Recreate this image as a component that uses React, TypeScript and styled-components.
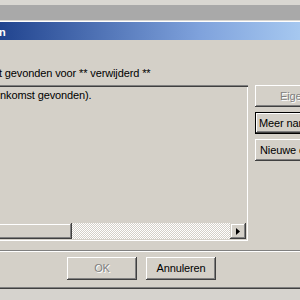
import React from "react";
import styled, { createGlobalStyle } from "styled-components";

const GlobalStyle = createGlobalStyle`
  html, body { margin: 0; padding: 0; background: #d6d3ce; }
  body { font-family: "Liberation Sans", Arial, sans-serif; font-size: 11px; }
`;

const Screen = styled.div`
  width: 300px;
  height: 300px;
  overflow: hidden;
  background: #d6d3ce;
  display: flex;
  flex-direction: column;
`;

const TopStrip = styled.div`
  height: 5px;
  background: #d9d7d2;
`;

const InactiveBand = styled.div`
  height: 15px;
  background: #a9a9a9;
`;

const Dialog = styled.div`
  display: flex;
  flex-direction: column;
  background: #d4d0c8;
  border-top: 1px solid #dcd9d3;
  box-shadow: inset 0 1px #ffffff;
  padding-top: 1px;
`;

const TitleBar = styled.div`
  height: 18px;
  background: linear-gradient(to right, #21448f 0px, #7fa2dc 200px, #a6c8f0 300px);
  color: #ffffff;
  font-weight: bold;
  font-size: 11px;
  line-height: 18px;
  display: flex;
  align-items: center;
  overflow: hidden;
  white-space: nowrap;
`;

const TitleText = styled.span`
  margin-left: -1px;
  padding-top: 1px;
`;

const Body = styled.div`
  display: flex;
  flex-direction: column;
  padding-top: 27px;
`;

const Label = styled.div`
  height: 13px;
  line-height: 13px;
  color: #000;
  white-space: nowrap;
  letter-spacing: -0.12px;
  margin-left: -1px;
`;

const MainRow = styled.div`
  display: flex;
  align-items: flex-start;
  margin-top: 5px;
`;

const ListBox = styled.div`
  margin-left: -10px;
  width: 258px;
  height: 156px;
  box-sizing: border-box;
  flex-shrink: 0;
  display: flex;
  flex-direction: column;
  padding: 2px;
  background: #d4d0c8;
  box-shadow: inset 1px 1px #808080, inset 2px 2px #404040, inset -1px -1px #ffffff, inset -2px -2px #d4d0c8;
`;

const ListItems = styled.div`
  flex: 1;
  padding: 2px 0 0 8px;
  overflow: hidden;
`;

const ListItem = styled.div`
  line-height: 13px;
  height: 13px;
  white-space: nowrap;
  letter-spacing: -0.12px;
  color: #000;
`;

const HScroll = styled.div`
  height: 16px;
  display: flex;
`;

const raised = `
  background: #d4d0c8;
  box-shadow: inset -1px -1px #404040, inset 1px 1px #d4d0c8, inset -2px -2px #808080, inset 2px 2px #ffffff;
`;

const Thumb = styled.div`
  width: 80px;
  ${raised}
`;

const Track = styled.div`
  flex: 1;
  background: repeating-conic-gradient(#ffffff 0 25%, #d4d0c8 0 50%) 0 0 / 2px 2px;
`;

const ArrowButton = styled.div`
  width: 16px;
  ${raised}
  display: flex;
  align-items: center;
  justify-content: center;
`;

const ButtonColumn = styled.div`
  display: flex;
  flex-direction: column;
  gap: 5px;
  margin-left: 7px;
  flex-shrink: 0;
`;

const Button = styled.div<{ $indent?: number; $default?: boolean; $disabled?: boolean; $width?: number }>`
  box-sizing: border-box;
  width: ${(p) => p.$width ?? 130}px;
  height: ${(p) => (p.$default ? 22 : 22)}px;
  background: #d4d0c8;
  box-shadow: ${(p) =>
    p.$default
      ? "inset 0 0 0 1px #000000, inset -2px -2px #404040, inset 2px 2px #ffffff, inset -3px -3px #808080"
      : "inset -1px -1px #404040, inset 1px 1px #ffffff, inset -2px -2px #808080, inset 2px 2px #d4d0c8"};
  display: flex;
  align-items: center;
  justify-content: ${(p) => (p.$indent === undefined ? "center" : "flex-start")};
  padding-left: ${(p) => p.$indent ?? 0}px;
  white-space: nowrap;
  overflow: hidden;
  line-height: 13px;
  letter-spacing: -0.12px;
  color: ${(p) => (p.$disabled ? "#808080" : "#000000")};
  text-shadow: ${(p) => (p.$disabled ? "1px 1px #ffffff" : "none")};
`;

const Separator = styled.div`
  margin-top: 9px;
  height: 1px;
  background: #808080;
  border-bottom: 1px solid #ffffff;
`;

const Footer = styled.div`
  display: flex;
  gap: 9px;
  padding: 5px 0 0 67px;
`;

const FooterButton = styled(Button)`
  height: 23px;
`;

const BottomEdge = styled.div`
  margin-top: 7px;
  height: 1px;
  background: #808080;
  border-bottom: 1px solid #404040;
`;

export default function App() {
  return (
    <>
      <GlobalStyle />
      <Screen>
        <TopStrip />
        <InactiveBand />
        <Dialog>
          <TitleBar>
            <TitleText>n</TitleText>
          </TitleBar>
          <Body>
            <Label>t gevonden voor ** verwijderd **</Label>
            <MainRow>
              <ListBox>
                <ListItems>
                  <ListItem>nkomst gevonden).</ListItem>
                </ListItems>
                <HScroll>
                  <Thumb />
                  <Track />
                  <ArrowButton>
                    <svg width="4" height="7" viewBox="0 0 4 7">
                      <polygon points="0,0 4,3.5 0,7" fill="#000" />
                    </svg>
                  </ArrowButton>
                </HScroll>
              </ListBox>
              <ButtonColumn>
                <Button $indent={25} $disabled>Eigenschappen</Button>
                <Button $indent={4} $default>Meer namen weergeven</Button>
                <Button $indent={5}>Nieuwe contactpersoon</Button>
              </ButtonColumn>
            </MainRow>
            <Separator />
            <Footer>
              <FooterButton $width={70} $disabled>OK</FooterButton>
              <FooterButton $width={70}>Annuleren</FooterButton>
            </Footer>
            <BottomEdge />
          </Body>
        </Dialog>
      </Screen>
    </>
  );
}
